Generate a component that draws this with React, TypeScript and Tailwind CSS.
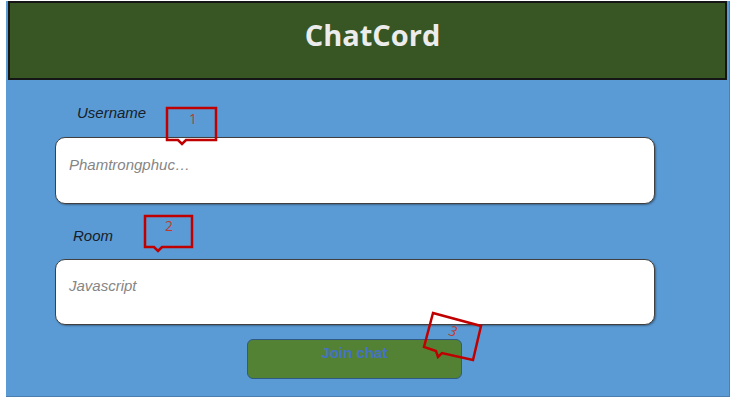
import React from 'react'

const labelFont = { fontFamily: '"Liberation Sans", Arial, sans-serif' }

const Callouts: React.FC = () => (
    <svg className="absolute inset-0 pointer-events-none" width={734} height={401} viewBox="0 0 734 401">
        <g fill="none" stroke="#c00000" strokeWidth={2.5} strokeLinejoin="miter">
            <path d="M167,108 H216 V140 H186 L182,144 L178,140 H167 Z" />
            <path d="M145,216 H192 V247 H162 L158,251 L154,247 H145 Z" />
            <path d="M433,313 L481,326 L473,360 L442,353 L438,357 L436,351 L424,347 Z" />
        </g>
        <g fill="#c0392b" fontFamily='"Open Sans", sans-serif' fontSize={14} textAnchor="middle">
            <text x={193} y={124}>1</text>
            <text x={169} y={231}>2</text>
            <text x={453} y={336} transform="rotate(14 453 331)" fontStyle="italic">3</text>
        </g>
    </svg>
)

export default function App() {
    return (
        <div className="relative w-[734px] h-[401px] bg-white overflow-hidden">
            <div className="ml-[6px] w-[724px] h-[396px] bg-[#5b9bd5] border-b border-r border-[#4a7fb0]">
                <div className="mx-[2px] mt-[1px] h-[79px] bg-[#375623] border-2 border-[#151515] flex items-center justify-center">
                    <h1 className="text-[29px] font-bold text-[#ececec] pb-[12px] pl-[10px]" style={{ fontFamily: '"Open Sans", sans-serif' }}>
                        ChatCord
                    </h1>
                </div>

                <div className="flex flex-col" style={labelFont}>
                    <label className="ml-[71px] mt-[24px] h-[18px] leading-[18px] text-[15px] italic text-[#16202b]">Username</label>
                    <div className="ml-[49px] mt-[15px] w-[600px] h-[67px] bg-white border-[1.5px] border-[#404040] rounded-[10px] shadow-[1px_1px_2px_rgba(0,0,0,0.35)] pl-[13px] pt-[15px]">
                        <span className="text-[15px] italic text-[#858585]">Phamtrongphuc…</span>
                    </div>

                    <label className="ml-[67px] mt-[23px] h-[18px] leading-[18px] text-[15px] italic text-[#16202b]">Room</label>
                    <div className="ml-[49px] mt-[14px] w-[600px] h-[66px] bg-white border-[1.5px] border-[#404040] rounded-[10px] shadow-[1px_1px_2px_rgba(0,0,0,0.35)] pl-[13px] pt-[14px]">
                        <span className="text-[15px] italic text-[#858585]">Javascript</span>
                    </div>

                    <button className="ml-[241px] mt-[14px] w-[215px] h-[40px] bg-[#548235] border border-[#2f5a85] rounded-[6px] flex justify-center pt-[2px]">
                        <span className="text-[15px] font-bold text-[#4472c4]">Join chat</span>
                    </button>
                </div>
            </div>
            <Callouts />
        </div>
    )
}
